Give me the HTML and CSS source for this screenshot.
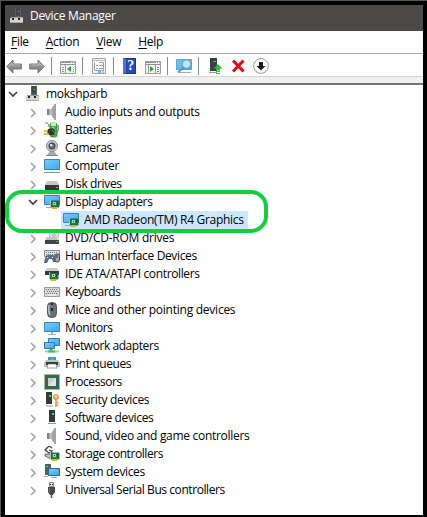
FILE: index.html
```html
<!DOCTYPE html>
<html lang="en">
<head>
<meta charset="utf-8">
<title>Device Manager</title>
<link rel="stylesheet" href="styles.css">
</head>
<body>
<svg class="defs" width="0" height="0" aria-hidden="true">
  <defs>
    <linearGradient id="screen" x1="0" y1="0" x2="1" y2="1"><stop offset="0" stop-color="#76cdfd"/><stop offset="1" stop-color="#3ea5f2"/></linearGradient>
    <linearGradient id="metal" x1="0" y1="0" x2="0" y2="1"><stop offset="0" stop-color="#b0b0b0"/><stop offset=".5" stop-color="#929292"/><stop offset="1" stop-color="#777"/></linearGradient>
    <linearGradient id="cone" x1="0" y1="0" x2="1" y2="0"><stop offset="0" stop-color="#666"/><stop offset=".45" stop-color="#c5c8ca"/><stop offset="1" stop-color="#858a8e"/></linearGradient>
    <symbol id="right" viewBox="0 0 8 10"><path d="M2 1l4 4-4 4" fill="none" stroke="#a6a6a6" stroke-width="1.7"/></symbol>
    <symbol id="down" viewBox="0 0 10 8"><path d="M1 2l4 4 4-4" fill="none" stroke="#404040" stroke-width="1.7"/></symbol>
    <symbol id="root" viewBox="0 0 16 16"><path d="M6 0h6v9H6z" fill="#5c6062"/><path d="M7 0h4v8H7z" fill="#43494a"/><path d="M9 3h1v1H9z" fill="#20ee40"/><path d="M2 9h12v1H2z" fill="#999"/><path d="M1 10h13v4H1z" fill="#d4d4d4"/><path d="M3 10h2v2H3zM9 10h2v2H9z" fill="#222"/><path d="M1 14h13v1H1z" fill="#aaa"/></symbol>
    <symbol id="speaker" viewBox="0 0 16 16"><path d="M3 5h4l4-5v16l-4-5H3z" fill="url(#cone)"/><path d="M3 5h2v6H3z" fill="#858585"/><path d="M10 0h2v16h-2z" fill="#a2a5a7"/></symbol>
    <symbol id="battery" viewBox="0 0 16 16"><path d="M1 1q4-1 4 4M14 3q2 5-2 9" fill="none" stroke="#777"/><rect x="6" y="1" width="7" height="14" rx="2" fill="#37b83b" stroke="#277a2c" stroke-width=".7"/><path d="M7 1h5v3H7z" fill="#d8dfd6"/><path d="M8 5h2v8H8z" fill="#8de889"/><path d="M4 7l5-1 2 3-1 4H5l-2-3z" fill="#343638"/><path d="M0 9h4M0 12h5" stroke="#e7a419" stroke-width="1.4"/><path d="M8 8l3 3" stroke="#777"/></symbol>
    <symbol id="camera" viewBox="0 0 16 16"><path d="M6 11h4l3 4H3z" fill="#aaa"/><circle cx="8" cy="6" r="5.5" fill="#c9cccd" stroke="#888"/><circle cx="8" cy="6" r="3.5" fill="#45484d"/><circle cx="8" cy="6" r="2" fill="#7e8990"/><circle cx="7" cy="5" r="1" fill="#fff"/><path d="M2 15.5h12" stroke="#888"/></symbol>
    <symbol id="computer" viewBox="0 0 16 16"><path d="M.5 1.5h15v10H.5z" fill="url(#screen)" stroke="#3885b3"/><path d="M0 14.5h16" stroke="#739aab"/><path d="M6 12h4v2H6z" fill="#e4edf2"/></symbol>
    <symbol id="disk" viewBox="0 0 16 16"><path d="M3 5h10l2 4H1z" fill="#c7c7c7"/><path d="M1 9h14v5H1z" fill="#363636"/><path d="M12 11h2v1h-2z" fill="#24e34a"/></symbol>
    <symbol id="board" viewBox="0 0 10 9"><path d="M1 1h8v6H1z" fill="#24834a" stroke="#145332" stroke-width=".8"/><path d="M3 2h3v3H3z" fill="#a8d5b3"/><path d="M4 3h1v1H4zM7 2h1v3H7z" fill="#174d32"/><path d="M2 7h5v2H2z" fill="#f0a91f"/><path d="M.5 0v7" stroke="#adc2ca"/></symbol>
    <symbol id="display" viewBox="0 0 16 16"><path d="M.5 1.5h15v9H.5z" fill="url(#screen)" stroke="#3885b3"/><path d="M2 13.500h5" stroke="#9ac"/><use href="#board" x="6" y="6" width="10" height="9"/></symbol>
    <symbol id="dvd" viewBox="0 0 16 16"><circle cx="10" cy="5" r="4.7" fill="#dcdede" stroke="#b4b4b4"/><circle cx="10" cy="5" r="1.3" fill="#fff" stroke="#888" stroke-width=".7"/><path d="M3 7h9l3 3H1z" fill="#c3c3c3"/><path d="M1 10h14v4H1z" fill="#444"/><path d="M12 11h2v1h-2z" fill="#2c4"/></symbol>
    <symbol id="hid" viewBox="0 0 16 16"><path d="M.5 2.500h15v6H.5z" fill="#e1e4e5" stroke="#888"/><path d="M2 4.500h12M2 6.500h10" stroke="#777" stroke-dasharray="1 1"/><path d="M3 7h7l2 7H9L8 11H5l-2 4H0l1-5z" fill="#536f8b"/><path d="M3 9h1v1H3zM8 9h1v1H8z" fill="#d6efff"/><rect x="11" y="6" width="4.500" height="8" rx="2" fill="#aaa" stroke="#444"/><path d="M13 7v3" stroke="#333"/></symbol>
    <symbol id="ide" viewBox="0 0 16 16"><path d="M3 2h10l2 3H1z" fill="#ccc"/><path d="M1 5h14v4H1z" fill="#393939"/><use href="#board" x="5" y="6" width="10" height="9"/></symbol>
    <symbol id="keyboard" viewBox="0 0 16 16"><path d="M.5 3.500h15v9H.5z" fill="#d5d7d8" stroke="#999"/><path d="M2 5.500h12M3 7.500h11M2 9.500h12" stroke="#777" stroke-dasharray="1 1"/><path d="M4 11h8" stroke="#fff"/></symbol>
    <symbol id="mouse" viewBox="0 0 16 16"><rect x="3.500" y=".5" width="9" height="15" rx="4" fill="#68717b" stroke="#555"/><path d="M5 3q-1 6 1 10" fill="none" stroke="#b7bec5" stroke-width="1.500"/><path d="M8 1v8" stroke="#20262b" stroke-width="2"/><path d="M8 3v3" stroke="#ccd"/></symbol>
    <symbol id="monitor" viewBox="0 0 16 16"><path d="M.5 2.500h15v9H.5z" fill="url(#screen)" stroke="#3885b3"/><path d="M7 12h2v2H7z" fill="#9bb1bd"/><path d="M4 14.500h8" stroke="#a6bbc5"/></symbol>
    <symbol id="network" viewBox="0 0 16 16"><path d="M4.500.5h11v7h-11z" fill="url(#screen)" stroke="#347ba5"/><path d="M.5 4.500h10v6H.5z" fill="url(#screen)" stroke="#347ba5"/><path d="M7 11v3" stroke="#37bd4c" stroke-width="3"/><path d="M1 13.500h14" stroke="#b8c2bc" stroke-width="2"/><path d="M4 13.500h7" stroke="#3bc84d" stroke-width="2"/></symbol>
    <symbol id="printer" viewBox="0 0 16 16"><path d="M4 1h8v4H4z" fill="#279de5"/><path d="M7 2h3v3H7z" fill="#39d256"/><path d="M2 4h12l2 3v4H0V7z" fill="#c3c3c3"/><path d="M2 6h12v3H2z" fill="#353535"/><path d="M4 8h8l1 4H3z" fill="#fff" stroke="#777" stroke-width=".7"/></symbol>
    <symbol id="processor" viewBox="0 0 16 16"><rect x=".5" y=".5" width="15" height="15" fill="#e6ddb1" stroke="#8e7524" stroke-dasharray="1 1"/><path d="M1 1h14v14H1z" fill="#306954"/><path d="M4 4h8v8H4z" fill="#c9cfcd"/><path d="M4 12l8-8v8z" fill="#e1e5e4"/></symbol>
    <symbol id="security" viewBox="0 0 16 16"><path d="M2 0h6v12H2z" fill="#363b3e"/><path d="M5 3h2v2H5z" fill="#24ee45"/><path d="M2 14h7" stroke="#999"/><circle cx="12" cy="5" r="2.500" fill="#f2c16a" stroke="#c98930"/><path d="M12 7v8M12.500 10.500h2M12.500 13h2" stroke="#d69b45" stroke-width="1.500"/><circle cx="12" cy="4" r=".8" fill="#fff"/></symbol>
    <symbol id="software" viewBox="0 0 16 16"><path d="M5 0h6v12H5z" fill="#33383a"/><path d="M8 3h2v2H8z" fill="#24ee45"/><path d="M4 13.500h8" stroke="#999"/></symbol>
    <symbol id="storage" viewBox="0 0 16 16"><path d="M8 2L5 0 1 4l4 3 3-2-3-1M6 6l4 2" fill="none" stroke="#444" stroke-width="1.300"/><path d="M1 8h7l2 3-3 2-6-3z" fill="#bbb" stroke="#555" stroke-width=".8"/><use href="#board" x="6" y="6" width="10" height="9"/></symbol>
    <symbol id="system" viewBox="0 0 16 16"><path d="M1 0h6v11H1z" fill="#555e64"/><path d="M2 2h2v1H2z" fill="#2df456"/><path d="M0 12.500h4" stroke="#aaa"/><path d="M4.500 4.500h11v7h-11z" fill="url(#screen)" stroke="#27658b"/><path d="M7 13.500h6" stroke="#8ab"/></symbol>
    <symbol id="usb" viewBox="0 0 16 16"><path d="M5.500.5h4v4h-4z" fill="#e4e4e4" stroke="#888"/><path d="M6 2h1v1H6zM8 2h1v1H8z" fill="#333"/><path d="M4 5h7v5l-2 3H6l-2-3z" fill="#484848"/><path d="M5.500 6v4" stroke="#777"/><path d="M7.500 12v4" stroke="#555" stroke-width="1.500"/></symbol>
    <symbol id="arrow" viewBox="0 0 16 16"><path d="M.8 8.500L7 2v4h8.300v5H7v4z" fill="url(#metal)" stroke="#777"/><path d="M2.500 8.500L6 5v2h8" fill="none" stroke="#c2c2c2" stroke-width=".8"/></symbol>
    <symbol id="panel" viewBox="0 0 16 16"><path d="M.5 3.500h15v12H.5z" fill="#f5f5f5" stroke="#9a9fa4"/><path d="M1 4h14v1H1zM1 6h14v1H1z" fill="#8d9297"/><path d="M11 4.500h1M13 4.500h1" stroke="#fff"/></symbol>
  </defs>
</svg>
<div class="window">
  <header class="titlebar"><svg class="icon"><use href="#root"/></svg><h1>Device Manager</h1></header>
  <nav class="menu"><span><u>F</u>ile</span><span><u>A</u>ction</span><span><u>V</u>iew</span><span><u>H</u>elp</span></nav>
  <div class="toolbar">
    <svg class="icon"><use href="#arrow"/></svg>
    <svg class="icon flip"><use href="#arrow"/></svg>
    <i class="sep"></i>
    <svg class="icon" viewBox="0 0 16 16"><use href="#panel"/><path d="M5.500 7v8" stroke="#999"/><path d="M2 9.500h2M2 11.500h2M2 13.500h2M13 9.500h1M13 11.500h1M13 13.500h1" stroke="#8998a5"/><path d="M11 8v6l-4-3z" fill="#2da82d"/></svg>
    <i class="sep"></i>
    <svg class="icon" viewBox="0 0 16 16"><path d="M1.500.5h13v15h-13z" fill="#f5f5f5" stroke="#a0a4a8"/><path d="M2 2.500h12" stroke="#b9bec2"/><path d="M3.500 4.500h9v8h-9z" fill="#fff" stroke="#9ba4ad"/><path d="M4 4.500h4" stroke="#fff"/><path d="M5 7.500h2M5 10.500h2" stroke="#49add6"/><path d="M8 7.500h4M8 10.500h4" stroke="#999"/><path d="M7 14h3" stroke="#21b5e7" stroke-width="1.500"/><path d="M11 14h2" stroke="#999"/></svg>
    <i class="sep"></i>
    <span class="icon help">?</span>
    <svg class="icon" viewBox="0 0 16 16"><use href="#panel"/><path d="M10.500 7v8M3.500 7v8" stroke="#999"/><path d="M12 9.500h2M12 11.500h2M12 13.500h2" stroke="#5b8fb5"/><path d="M5 8v6l4-3z" fill="#2da82d"/></svg>
    <i class="sep"></i>
    <svg class="icon" viewBox="0 0 16 16"><path d="M.5 1.500h15v10H.5z" fill="url(#screen)" stroke="#6aa5c8"/><path d="M3 14.500h12" stroke="#9aabb4"/><circle cx="10.500" cy="6" r="4.300" fill="#b8e5fa" stroke="#7793a3"/><path d="M7.500 9.500L2 14.500" stroke="#5d92b1" stroke-width="1.800"/></svg>
    <i class="sep"></i>
    <svg class="icon" viewBox="0 0 16 16"><path d="M3 0h7v13H3z" fill="#3b4045"/><path d="M6 3h3v1H6z" fill="#20df3e"/><path d="M2 14.500h8" stroke="#999"/><path d="M11 6l4.500 4.500H13v2H9v-2H6.500z" fill="#2fc32f"/><path d="M9 13.500h4M9 15.500h4" stroke="#2fc32f"/></svg>
    <svg class="icon" viewBox="0 0 16 16"><path d="M3 2.500l10.500 11M13.500 2.500L3 13.500" stroke="#df0712" stroke-width="3"/></svg>
    <svg class="icon" viewBox="0 0 16 16"><circle cx="8" cy="8" r="7.400" fill="#fff" stroke="#999"/><path d="M6 4h4v4h2.500L8 12.500 3.500 8H6z" fill="#1a1a1a"/></svg>
  </div>
  <div class="band"></div>
  <main class="tree">
    <div class="row root"><svg class="down"><use href="#down"/></svg><svg class="icon"><use href="#root"/></svg><span>mokshparb</span></div>
    <div class="row"><svg class="right"><use href="#right"/></svg><svg class="icon"><use href="#speaker"/></svg><span>Audio inputs and outputs</span></div>
    <div class="row"><svg class="right"><use href="#right"/></svg><svg class="icon"><use href="#battery"/></svg><span class="snug">Batteries</span></div>
    <div class="row"><svg class="right"><use href="#right"/></svg><svg class="icon"><use href="#camera"/></svg><span class="snug">Cameras</span></div>
    <div class="row"><svg class="right"><use href="#right"/></svg><svg class="icon"><use href="#computer"/></svg><span>Computer</span></div>
    <div class="row"><svg class="right"><use href="#right"/></svg><svg class="icon"><use href="#disk"/></svg><span class="snug">Disk drives</span></div>
    <div class="group">
      <div class="row open"><svg class="down"><use href="#down"/></svg><svg class="icon"><use href="#display"/></svg><span class="snug">Display adapters</span></div>
      <div class="row child"><div class="selected"><svg class="icon"><use href="#display"/></svg><span>AMD Radeon(TM) R4 Graphics</span></div></div>
      <div class="callout"></div>
    </div>
    <div class="row"><svg class="right"><use href="#right"/></svg><svg class="icon"><use href="#dvd"/></svg><span class="loose">DVD/CD-ROM drives</span></div>
    <div class="row"><svg class="right"><use href="#right"/></svg><svg class="icon"><use href="#hid"/></svg><span class="snug">Human Interface Devices</span></div>
    <div class="row"><svg class="right"><use href="#right"/></svg><svg class="icon"><use href="#ide"/></svg><span class="snug">IDE ATA/ATAPI controllers</span></div>
    <div class="row"><svg class="right"><use href="#right"/></svg><svg class="icon"><use href="#keyboard"/></svg><span class="tight">Keyboards</span></div>
    <div class="row"><svg class="right"><use href="#right"/></svg><svg class="icon"><use href="#mouse"/></svg><span class="loose">Mice and other pointing devices</span></div>
    <div class="row"><svg class="right"><use href="#right"/></svg><svg class="icon"><use href="#monitor"/></svg><span class="snug">Monitors</span></div>
    <div class="row"><svg class="right"><use href="#right"/></svg><svg class="icon"><use href="#network"/></svg><span class="tight">Network adapters</span></div>
    <div class="row"><svg class="right"><use href="#right"/></svg><svg class="icon"><use href="#printer"/></svg><span class="tight">Print queues</span></div>
    <div class="row"><svg class="right"><use href="#right"/></svg><svg class="icon"><use href="#processor"/></svg><span class="tight">Processors</span></div>
    <div class="row"><svg class="right"><use href="#right"/></svg><svg class="icon"><use href="#security"/></svg><span>Security devices</span></div>
    <div class="row"><svg class="right"><use href="#right"/></svg><svg class="icon"><use href="#software"/></svg><span class="snug">Software devices</span></div>
    <div class="row"><svg class="right"><use href="#right"/></svg><svg class="icon"><use href="#speaker"/></svg><span>Sound, video and game controllers</span></div>
    <div class="row"><svg class="right"><use href="#right"/></svg><svg class="icon"><use href="#storage"/></svg><span class="tight">Storage controllers</span></div>
    <div class="row"><svg class="right"><use href="#right"/></svg><svg class="icon"><use href="#system"/></svg><span class="snug">System devices</span></div>
    <div class="row"><svg class="right"><use href="#right"/></svg><svg class="icon"><use href="#usb"/></svg><span class="tight">Universal Serial Bus controllers</span></div>
  </main>
</div>
</body>
</html>
```
FILE: styles.css
```css
* { box-sizing: border-box; }
body { margin: 0; width: 427px; height: 517px; overflow: hidden; background: #000; border-top: 1px solid #555; border-left: 1px solid #555; font: 12px/18px "Open Sans", "Noto Sans", sans-serif; color: #000; letter-spacing: -.3px; }
.defs { display: block; position: absolute; }
.window { margin: 4px 4px 2px; width: 418px; height: 510px; background: #fff; display: flex; flex-direction: column; }
.icon { width: 16px; height: 16px; flex: none; }
.titlebar { height: 26px; background: #4c4a48; display: flex; align-items: center; padding: 0 0 4px 4px; gap: 5px; color: #fff; }
.titlebar h1 { margin: 0; font: inherit; white-space: nowrap; }
.menu { height: 22px; display: flex; align-items: center; padding-left: 6px; gap: 17px; }
.menu u { text-underline-offset: 2px; }
.toolbar { height: 24px; border-top: 1px solid #a7a9b4; border-bottom: 1px solid #d5d5d5; display: flex; align-items: center; padding: 1px 0 0 1px; gap: 7px; }
.flip { transform: scaleX(-1); }
.sep { width: 1px; height: 18px; background: #8b8b8b; margin: 0 1px 0 -1px; }
.help { background: #244dba; border: 1px solid #193783; border-left: 3px solid #5078c9; width: 13px; margin: 0 2px 0 1px; color: #fff; font: bold 14px/14px "Liberation Serif", serif; text-align: center; }
.band { height: 8px; background: #f0f0f0; border-bottom: 2px solid #747474; }
.tree { display: flex; flex-direction: column; }
.row { height: 18px; flex: none; display: flex; align-items: center; padding-left: 24px; white-space: nowrap; }
.row .icon { margin-right: 5px; }
.snug { letter-spacing: -.36px; }
.tight { letter-spacing: -.43px; }
.loose { letter-spacing: -.25px; }
.right { width: 8px; height: 10px; margin-right: 7px; position: relative; top: 1px; }
.down { width: 10px; height: 8px; margin-right: 6px; }
.row.root { padding-left: 3px; }
.row.root .icon { margin-right: 5px; margin-left: 1px; }
.row.open { padding-left: 23px; }
.group { position: relative; }
.row.child { padding-left: 56px; }
.selected { height: 18px; width: 187px; padding-left: 2px; display: flex; align-items: center; background: #cce8ff; }
.callout { position: absolute; left: 0; top: -3px; width: 263px; height: 43px; border: 4px solid #10d040; border-radius: 17px; z-index: 1; }
```
